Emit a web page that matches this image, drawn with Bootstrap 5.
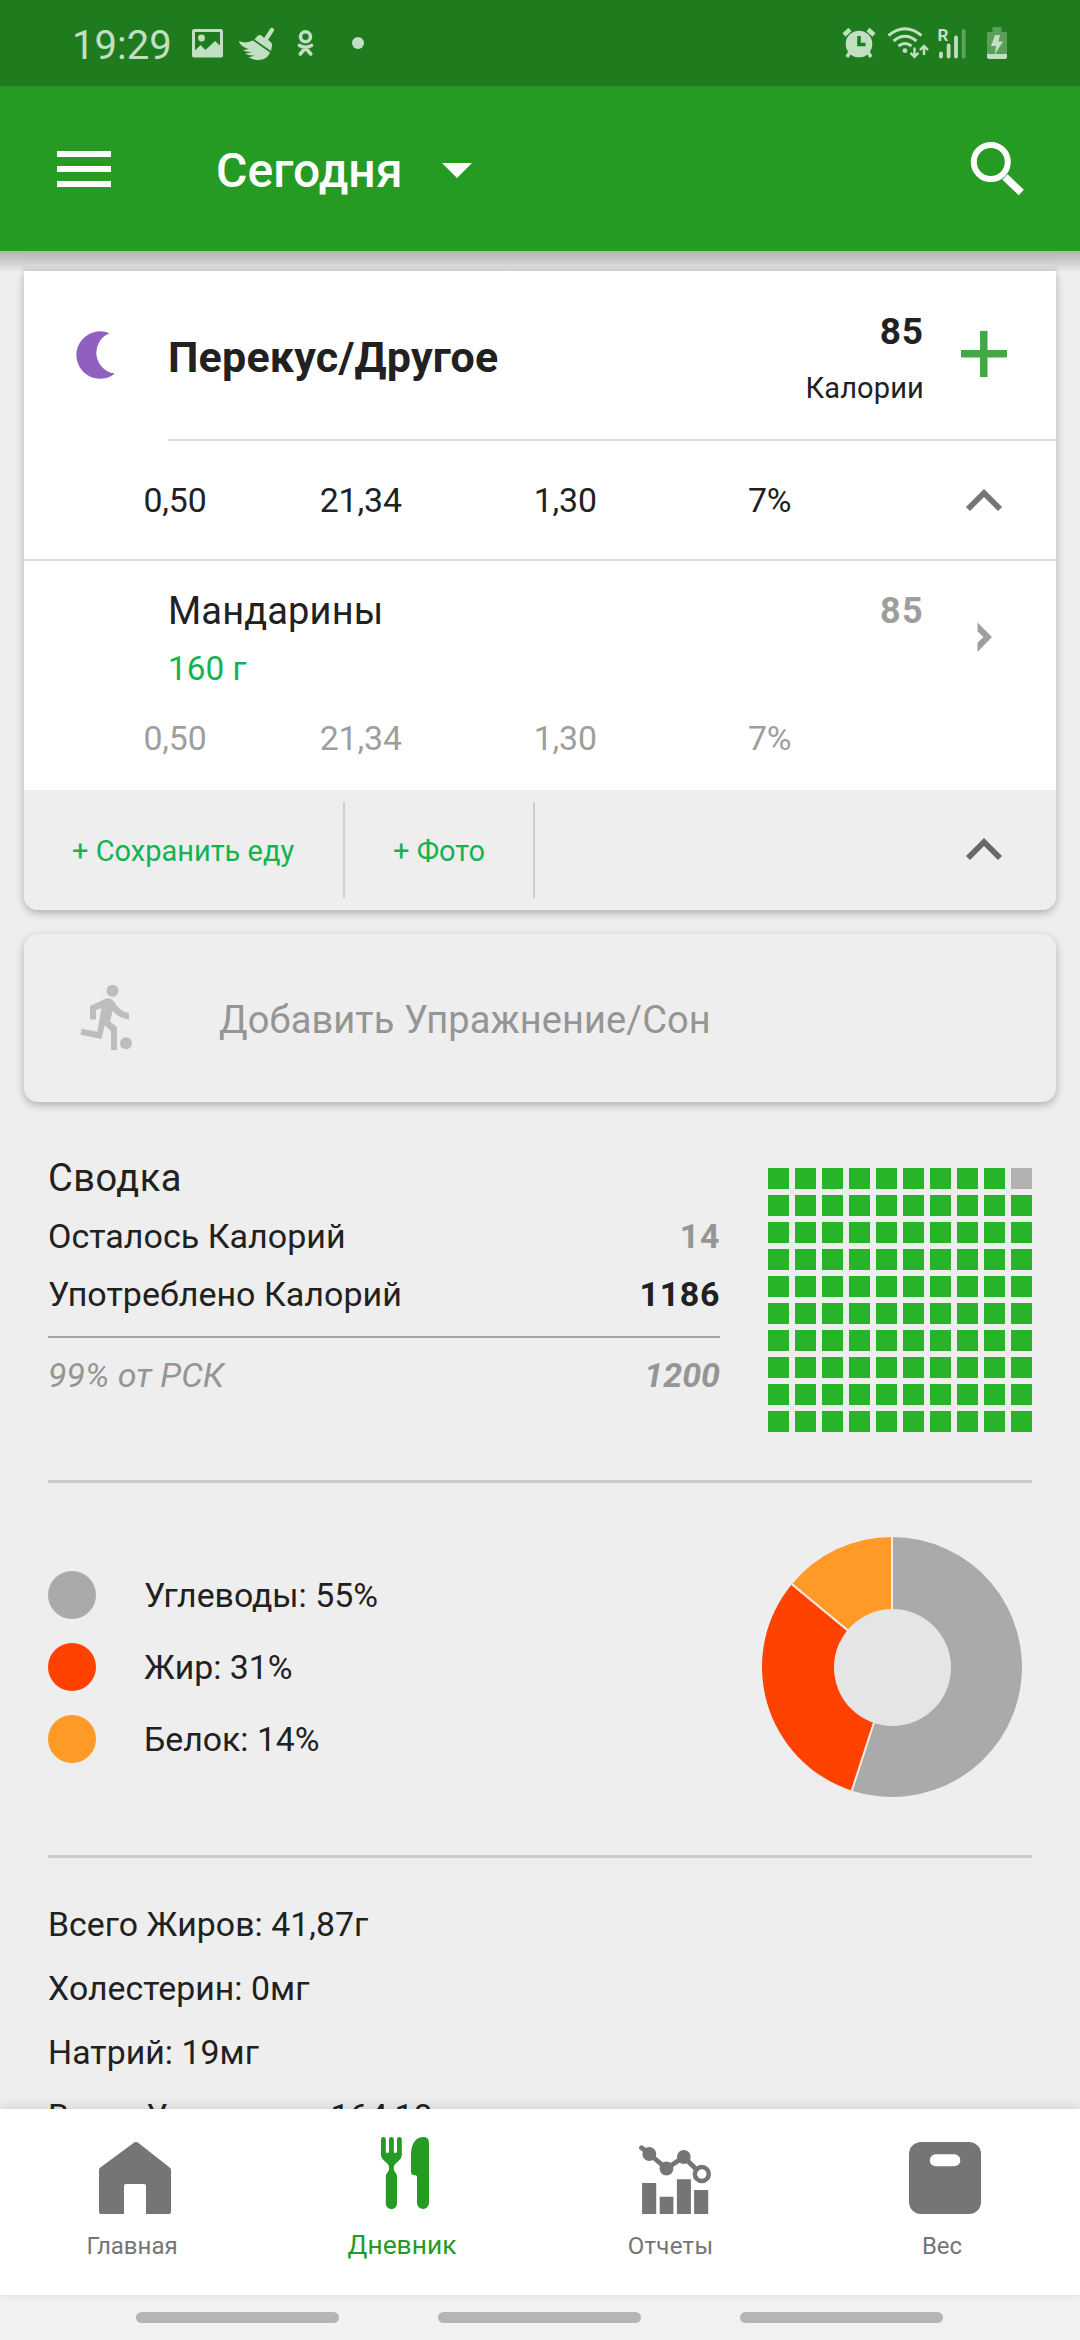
<!DOCTYPE html>
<html lang="ru">
<head>
<meta charset="utf-8">
<meta name="viewport" content="width=device-width, initial-scale=1">
<title>Дневник питания</title>
<link href="https://cdn.jsdelivr.net/npm/bootstrap@5.3.0/dist/css/bootstrap.min.css" rel="stylesheet">
<style>
  body { font-family: Roboto, "Noto Sans", sans-serif; background: #eee; color: #212121; width: 1080px; height: 2340px; overflow: hidden; font-size: 33.8px; line-height: 58px; }
  svg { display: block; flex: none; }
  .muted-ink { color: #9e9e9e; }
  .dim-ink { color: #959595; }
  .accent-ink { color: #12b350; }
  .status-bar { height: 86px; background: #1f7c1e; color: #c3dfc3; padding: 0 73px 0 72px; }
  .status-time { width: 120px; font-size: 40px; padding-top: 5px; }
  .app-bar { height: 165px; background: #259b24; padding: 0 54px 0 57px; }
  .app-title { font-size: 48px; font-weight: 500; letter-spacing: .12px; padding-top: 5px; margin-left: 105px; width: 226px; }
  .bar-shade { height: 20px; background: linear-gradient(#b2b2b2, #c8c8c8 40%, #dcdcdc 80%, #e9e9e9); padding: 0 22px; }
  .bar-shade div { height: 20px; background: linear-gradient(#b2b2b2, #c6c6c6 40%, #d9d9d9 75%, #dadada); }
  .meal-card { margin: 0 24px; border-radius: 0 0 14px 14px; box-shadow: 0 3px 9px rgba(0,0,0,.27); background: #fff; }
  .meal-head { height: 168px; }
  .meal-head .moon-col { width: 144px; padding-left: 52px; }
  .meal-title { font-size: 43px; font-weight: 700; padding-top: 3px; letter-spacing: .2px; }
  .meal-cals { line-height: 56px; padding-top: 10px; }
  .cals-num { font-size: 37px; font-weight: 700; letter-spacing: .9px; }
  .cals-label { font-size: 29px; letter-spacing: .15px; }
  .side-icon { width: 132px; padding-right: 12px; display: flex; justify-content: center; }
  .rule { height: 2px; background: #dadada; }
  .nutri { padding-left: 67.5px; line-height: 56px; letter-spacing: -.1px; }
  .nutri span { width: 204.5px; text-align: center; padding-top: 1px; }
  .nutri span:first-child { width: 167px; }
  .nutri-total { height: 118px; }
  .food-item { height: 229px; padding-top: 21px; }
  .food-name { font-size: 38px; letter-spacing: .15px; }
  .food-portion { font-size: 33.3px; }
  .food-cals { font-size: 36px; font-weight: 700; letter-spacing: 1.4px; }
  .meal-foot { height: 120px; background: #eee; border-radius: 0 0 14px 14px; font-size: 29px; }
  .foot-act { height: 96px; line-height: 98px; padding-left: 48px; border-right: 2px solid #cecece; }
  .exercise { height: 168px; margin: 24px 24px 0; border-radius: 14px; box-shadow: 0 3px 9px rgba(0,0,0,.27); background: #eee; padding-left: 54px; font-size: 38px; letter-spacing: .12px; }
  .summary { height: 378px; padding: 47px 48px 0; }
  .summary-text { width: 672px; font-size: 34px; letter-spacing: .02px; }
  .summary-text .fw-bold { letter-spacing: .6px; }
  .sum-rule { height: 2px; background: #a3a3a3; margin: 13px 0 8px; }
  .squares { display: grid; grid-template-columns: repeat(10, 21px); gap: 6px; margin-top: 19px; height: 264px; }
  .squares i { height: 21px; background: #28b428; }
  .squares i.left-over { background: #b2b2b2; }
  .section-rule { height: 3px; background: #cacaca; margin: 0 48px; }
  .macros { height: 372px; padding: 0 58px 4px 48px; }
  .swatch { width: 48px; height: 48px; border-radius: 50%; }
  .details { padding: 35px 48px 0; line-height: 64px; letter-spacing: .05px; }
  .tab-bar { height: 186px; background: #fff; box-shadow: 0 -2px 10px rgba(0,0,0,.12); position: relative; }
  .tab-item { width: 270px; color: #757575; font-size: 24px; line-height: 40px; padding-top: 33px; }
  .tab-item svg { margin-bottom: 12px; }
  .tab-item span { margin-right: 6px; }
  .tab-item.current { color: #259b24; font-size: 26.4px; padding-top: 28px; }
  .tab-item.current svg { margin-bottom: 15px; }
  .sys-bar { height: 45px; background: #f1f1f1; gap: 99px; padding-right: 2px; }
  .sys-bar div { width: 203px; height: 11px; border-radius: 6px; background: #b5b5b5; }
</style>
<script src="https://cdn.jsdelivr.net/npm/bootstrap@5.3.0/dist/js/bootstrap.bundle.min.js"></script>
</head>
<body class="d-flex flex-column">

<div class="status-bar d-flex align-items-center flex-shrink-0">
  <div class="status-time">19:29</div>
  <svg width="31" height="86" viewBox="192 0 31 86" fill="currentColor"><path fill-rule="evenodd" d="M194.500 29h26q2.500 0 2.500 2.500v23.500q0 2.600-2.500 2.600h-26q-2.500 0-2.500-2.600V31.500q0-2.500 2.500-2.500zM195 32v18.500l5.500-5.500 5 5 9.500-9 5 4.500V32z"/><circle cx="201.500" cy="38" r="3.400"/></svg>
  <svg style="margin-left:15px" width="37" height="86" viewBox="238 0 37 86" fill="currentColor"><path d="M272 30 265 40.500" stroke="currentColor" stroke-width="4.200" stroke-linecap="round"/><path d="M254.500 39.500 258 35.500Q259.500 34.500 261 35.300L263.500 37.500 268 39.500 271.500 43Q272.500 44.500 272 46L271 51z"/><path d="M238.600 41Q246 44 253 40.600L270 52.500Q267 60 258.500 60 253 60 248.500 57.200 252 57 255 55.300 249.500 56.200 245 53.800 249 53.500 252 51.800 246 52.500 243 50 246 49.800 248.500 49 241 47 238.600 41z"/></svg>
  <svg style="margin-left:22px" width="17" height="86" viewBox="297 0 17 86" fill="none" stroke="currentColor" stroke-width="3.600" stroke-linecap="round"><circle cx="305.500" cy="36.700" r="5"/><path d="M299.500 45.500q6 3.500 12 0M305.500 48l-5.300 6M305.500 48l5.300 6"/></svg>
  <svg style="margin-left:38px" width="12" height="86" viewBox="352 0 12 86" fill="currentColor"><circle cx="358" cy="43" r="6"/></svg>
  <svg class="ms-auto" width="34" height="86" viewBox="842 0 34 86" fill="currentColor"><g stroke="currentColor" stroke-width="4.500"><path d="M844 35 850 29.500M874 35 868 29.500"/><path d="M850 52 847 57M868 52 871 57" stroke-width="3.500"/></g><circle cx="859" cy="44" r="13.300"/><path d="M859 36v8.500h6.500" fill="none" stroke="#1f7c1e" stroke-width="3.600"/></svg>
  <svg style="margin-left:11px" width="42" height="86" viewBox="887 0 42 86" fill="none" stroke="currentColor" stroke-width="3"><path d="M888.500 35.500q16.500-13.500 33 0M893.500 41q11.500-9.500 23 0M898.500 46q6.500-5 13 0"/><circle cx="905" cy="50.700" r="2.400" fill="currentColor" stroke="none"/><path d="M914.500 47.500v9M910.500 52.800l4 4 4-4M924 55V46M920 50l4-4 4 4" stroke-width="2.400"/></svg>
  <svg style="margin-left:9px" width="29" height="86" viewBox="938 0 29 86" fill="none" stroke="currentColor" stroke-width="3.800" stroke-linecap="round"><text x="937.500" y="40.500" font-family="Roboto" font-size="17" font-weight="700" fill="currentColor" stroke="none">R</text><path d="M941 53.500V56.500M948.600 45.500V56.500M956 37.500V56.500"/><path d="M963.700 31V56.500" stroke="#5fa55f"/></svg>
  <svg style="margin-left:20px" width="20" height="86" viewBox="987 0 20 86"><path d="M992.500 27h9v5h4q1.500 0 1.500 1.500V54h-20V33.500q0-1.500 1.500-1.500h4z" fill="#5a9f5a"/><path d="M987 54h20v3q0 2-2 2h-16q-2 0-2-2z" fill="#c3dfc3"/><path d="M995 35h5l-1.500 6.500h4.500L994.500 55l1.500-9h-5z" fill="#c3dfc3"/></svg>
</div>

<nav class="app-bar d-flex align-items-center flex-shrink-0 text-white">
  <svg width="54" height="165" viewBox="57 86 54 165" fill="#fff"><path d="M57 151h54v6H57zM57 166h54v6H57zM57 181h54v6H57z"/></svg>
  <div class="app-title">Сегодня</div>
  <svg width="30" height="165" viewBox="442 86 30 165" fill="#fff"><path d="M442 163h30l-15 15z"/></svg>
  <svg class="ms-auto" width="56" height="165" viewBox="970 86 56 165" fill="none" stroke="#fff"><circle cx="990.800" cy="162" r="17" stroke-width="6"/><path d="M1005 177 1021.300 192.500" stroke-width="7.500"/></svg>
</nav>

<main class="flex-grow-1 overflow-hidden">
  <div class="bar-shade"><div></div></div>

  <section class="meal-card">
    <div class="meal-head d-flex align-items-center">
      <div class="moon-col"><svg width="40" height="168" viewBox="76 271 40 168" fill="#9060c0"><path d="M109.500 333.300A23.700 23.700 0 1 0 115 373.500A20.900 20.900 0 0 1 109.500 333.300z"/></svg></div>
      <div class="meal-title">Перекус/Другое</div>
      <div class="meal-cals ms-auto text-end">
        <div class="cals-num">85</div>
        <div class="cals-label">Калории</div>
      </div>
      <div class="side-icon"><svg width="46" height="168" viewBox="961 271 46 168" stroke="#43a843" stroke-width="7.500"><path d="M961 353.800h46M983.800 331v46"/></svg></div>
    </div>
    <div class="rule" style="margin-left:144px"></div>
    <div class="nutri nutri-total d-flex align-items-center">
      <span>0,50</span><span>21,34</span><span>1,30</span><span>7%</span>
      <div class="side-icon ms-auto"><svg width="36" height="118" viewBox="966 441 36 118" fill="#757575"><path d="M984 489 1002 507 998 511 984 497 970 511 966 507z"/></svg></div>
    </div>
    <div class="rule"></div>
    <div class="food-item">
      <div class="d-flex">
        <div style="margin-left:144px">
          <div class="food-name">Мандарины</div>
          <div class="food-portion accent-ink">160 г</div>
        </div>
        <div class="food-cals muted-ink ms-auto">85</div>
        <div class="side-icon"><svg width="15" height="116" viewBox="976.500 582 15 116" fill="#9e9e9e"><path d="M977 622.400 991.500 637 977 652V642.700L983 637 977 631.600z"/></svg></div>
      </div>
      <div class="nutri d-flex muted-ink" style="margin-top:12px"><span>0,50</span><span>21,34</span><span>1,30</span><span>7%</span></div>
    </div>
    <div class="meal-foot d-flex align-items-center accent-ink">
      <div class="foot-act" style="width:321px">+ Сохранить еду</div>
      <div class="foot-act" style="width:190px">+ Фото</div>
      <div class="side-icon ms-auto"><svg width="36" height="120" viewBox="966 790 36 120" fill="#686868"><path d="M984 838 1002 856 998 860 984 846 970 860 966 856z"/></svg></div>
    </div>
  </section>

  <section class="exercise d-flex align-items-center dim-ink">
    <svg width="58" height="168" viewBox="78 934 58 168" fill="#bdbdbd"><circle cx="112.500" cy="990.800" r="6"/><circle cx="126" cy="1043.300" r="6"/><path d="M90 1006 105 999Q110 997 113.500 1001 120 1012 129 1013V1019.500Q119 1018.500 112.500 1011L110.200 1021.400 117 1027.200V1050H111V1031L104.700 1025.200 101.500 1039 80.400 1034.800 81.700 1028.700 97.300 1031.700 101.500 1008 96 1010V1019.500H90z"/></svg>
    <div style="margin:4px 0 0 83px">Добавить Упражнение/Сон</div>
  </section>

  <section class="summary d-flex justify-content-between">
    <div class="summary-text">
      <div style="font-size:38px;letter-spacing:.5px">Сводка</div>
      <div class="d-flex justify-content-between"><span>Осталось Калорий</span><span class="fw-bold dim-ink">14</span></div>
      <div class="d-flex justify-content-between"><span>Употреблено Калорий</span><span class="fw-bold">1186</span></div>
      <div class="sum-rule"></div>
      <div class="d-flex justify-content-between fst-italic dim-ink"><span>99% от РСК</span><span class="fw-bold" style="letter-spacing:0">1200</span></div>
    </div>
    <div class="squares" id="squares"></div>
  </section>
  <div class="section-rule"></div>

  <section class="macros d-flex align-items-center justify-content-between">
    <div class="d-flex flex-column" style="gap:24px;line-height:49px">
      <div class="d-flex" style="gap:48px;height:48px"><div class="swatch" style="background:#aaa"></div>Углеводы: 55%</div>
      <div class="d-flex" style="gap:48px;height:48px"><div class="swatch" style="background:#ff4200"></div>Жир: 31%</div>
      <div class="d-flex" style="gap:48px;height:48px"><div class="swatch" style="background:#ff9a26"></div>Белок: 14%</div>
    </div>
    <svg width="260" height="260" viewBox="-130 -130 260 260">
      <path d="M0 0V-130A130 130 0 1 1 -40.170 123.640z" fill="#aaa"/>
      <path d="M0 0-40.170 123.640A130 130 0 0 1 -100.170 -82.870z" fill="#ff4200"/>
      <path d="M0 0-100.170 -82.870A130 130 0 0 1 0 -130z" fill="#ff9a26"/>
      <path d="M0-130V0L-40.170 123.640M0 0-100.170-82.870" fill="none" stroke="#f6ece4" stroke-width="2"/>
      <circle cx=".500" cy=".500" r="58.500" fill="#e5e5e5"/>
    </svg>
  </section>
  <div class="section-rule"></div>

  <section class="details">
    <div>Всего Жиров: 41,87г</div>
    <div>Холестерин: 0мг</div>
    <div>Натрий: 19мг</div>
    <div>Всего Углеводов: 164,18г</div>
  </section>
</main>

<footer class="tab-bar d-flex flex-shrink-0">
  <div class="tab-item d-flex flex-column align-items-center">
    <svg width="72" height="72" viewBox="0 0 72 72" fill="currentColor"><path d="M0 28Q0 26 2 25L34.500 1Q37 -.800 39.500 1L70 25Q72 26 72 28V70Q72 72 70 72H47V44Q47 42 45 42H27Q25 42 25 44V72H2Q0 72 0 70z"/></svg>
    <span>Главная</span>
  </div>
  <div class="tab-item current d-flex flex-column align-items-center">
    <svg width="72" height="73" viewBox="0 0 72 73" fill="currentColor"><path d="M12 2.500a2.400 2.400 0 0 1 4.800 0V14.500a1.600 1.600 0 0 0 3.200 0V2.500a2.400 2.400 0 0 1 4.800 0V14.500a1.600 1.600 0 0 0 3.200 0V2.500a2.400 2.400 0 0 1 4.800 0V18Q32.800 21 29 24.500 24.800 27.500 24.800 30V32Q24.800 34 26.500 35.500 28 37.500 28 40V66.500a5.600 5.600 0 0 1-11.200 0V40Q16.800 37.500 18.300 35.500 20 34 20 32V30Q20 27.500 16 24.500 12 21 12 18zM60 6V66a6 6 0 0 1-12 0V40Q48 38 45 38 42 38 42 35V18Q42 3 52 .300 60-1 60 6z"/></svg>
    <span>Дневник</span>
  </div>
  <div class="tab-item d-flex flex-column align-items-center">
    <svg width="72" height="72" viewBox="0 0 72 72" fill="currentColor"><path d="M3.100 41H17.200V72H3.100zM20.700 54.700H34.400V72H20.700zM37.900 37.300H51.900V72H37.900zM55.100 48H69.200V72H55.100z"/><circle cx="10.300" cy="12" r="6.900"/><circle cx="27.500" cy="26.500" r="6.900"/><circle cx="44.800" cy="15" r="6.900"/><g fill="none" stroke="currentColor" stroke-linecap="round"><path d="M2.500 5.700 10.300 12 27.500 26.500 44.800 15 58 28" stroke-width="4.800"/><circle cx="62.800" cy="32" r="6.900" stroke-width="4.600"/></g><circle cx="62.800" cy="32" r="4.600" fill="#fff"/></svg>
    <span style="letter-spacing:.3px;margin-right:9px">Отчеты</span>
  </div>
  <div class="tab-item d-flex flex-column align-items-center">
    <svg width="72" height="72" viewBox="0 0 72 72"><rect width="72" height="72" rx="12" fill="currentColor"/><rect x="20.800" y="12.200" width="30.500" height="12" rx="6" fill="#fff"/></svg>
    <span>Вес</span>
  </div>
</footer>
<div class="sys-bar d-flex justify-content-center align-items-center flex-shrink-0"><div></div><div></div><div></div></div>

<script>
  // Each square is one percent of the daily calorie goal; the last one of the top row is still open.
  const box = document.getElementById('squares');
  for (let i = 0; i < 100; i++) {
    const cell = document.createElement('i');
    if (i === 9) cell.className = 'left-over';
    box.appendChild(cell);
  }
</script>
</body>
</html>
